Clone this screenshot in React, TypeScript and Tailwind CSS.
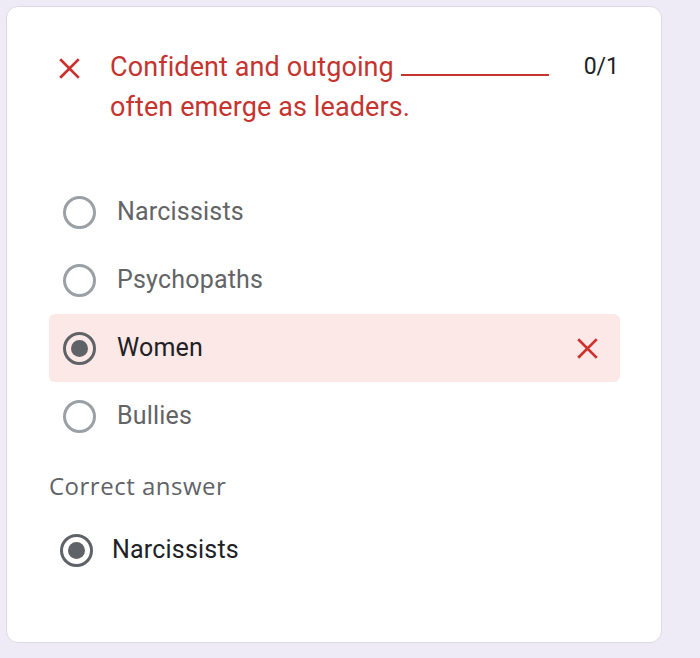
import React from 'react';

function XIcon({ className }: { className?: string }) {
  return (
    <svg viewBox="0 0 24 24" className={className} fill="none" stroke="currentColor" strokeWidth={2.6} strokeLinecap="square">
      <path d="M4 4 L20 20 M20 4 L4 20" />
    </svg>
  );
}

function Radio({ checked }: { checked?: boolean }) {
  if (checked) {
    return (
      <div className="w-[33px] h-[33px] rounded-full border-[3px] border-[#5f6368] flex items-center justify-center shrink-0">
        <div className="w-[17px] h-[17px] rounded-full bg-[#5f6368]" />
      </div>
    );
  }
  return <div className="w-[33px] h-[33px] rounded-full border-[3px] border-[#9aa0a6] shrink-0" />;
}

const options = ['Narcissists', 'Psychopaths', 'Women', 'Bullies'];

export default function App() {
  return (
    <div className="w-[700px] h-[658px] bg-[#eeebf6] pt-[6px] pl-[6px]" style={{ fontFamily: 'Roboto, sans-serif' }}>
      <div className="w-[656px] h-[637px] bg-white rounded-[12px] border border-[#dcdae3] pt-[40px]">
        {/* question */}
        <div className="flex pl-[50px] pr-[42px]">
          <XIcon className="w-[25px] h-[25px] text-[#c9302c] mt-[9px] shrink-0" />
          <div className="ml-[28px] text-[27px] leading-[40px] tracking-[0.1px] text-[#c5342f] flex-1">
            Confident and outgoing <span className="inline-block w-[148px] border-b-2 border-[#c5342f] align-baseline" />
            <br />
            often emerge as leaders.
          </div>
          <div className="text-[23px] leading-[40px] text-[#202124] ml-[20px]">0/1</div>
        </div>

        {/* options */}
        <div className="mt-[51px] pl-[42px] pr-[41px] flex flex-col">
          {options.map((o) => {
            const wrong = o === 'Women';
            return (
              <div
                key={o}
                className={`h-[68px] flex items-center pl-[14px] pr-[20px] rounded-[6px] ${wrong ? 'bg-[#fce8e6]' : ''}`}
              >
                <Radio checked={wrong} />
                <span className={`ml-[21px] text-[25px] tracking-[0.2px] flex-1 ${wrong ? 'text-[#202124]' : 'text-[#626466]'}`}>{o}</span>
                {wrong && <XIcon className="w-[25px] h-[25px] text-[#d0302b]" />}
              </div>
            );
          })}
        </div>

        {/* correct answer */}
        <div className="mt-[21px] pl-[42px] text-[24px] tracking-[0.5px] text-[#5f6368] leading-[30px]" style={{ fontFamily: '"Open Sans", sans-serif' }}>
          Correct answer
        </div>
        <div className="mt-[29px] pl-[53px] flex items-center h-[40px]">
          <Radio checked />
          <span className="ml-[19px] text-[25px] tracking-[0.2px] text-[#202124]">Narcissists</span>
        </div>
      </div>
    </div>
  );
}
